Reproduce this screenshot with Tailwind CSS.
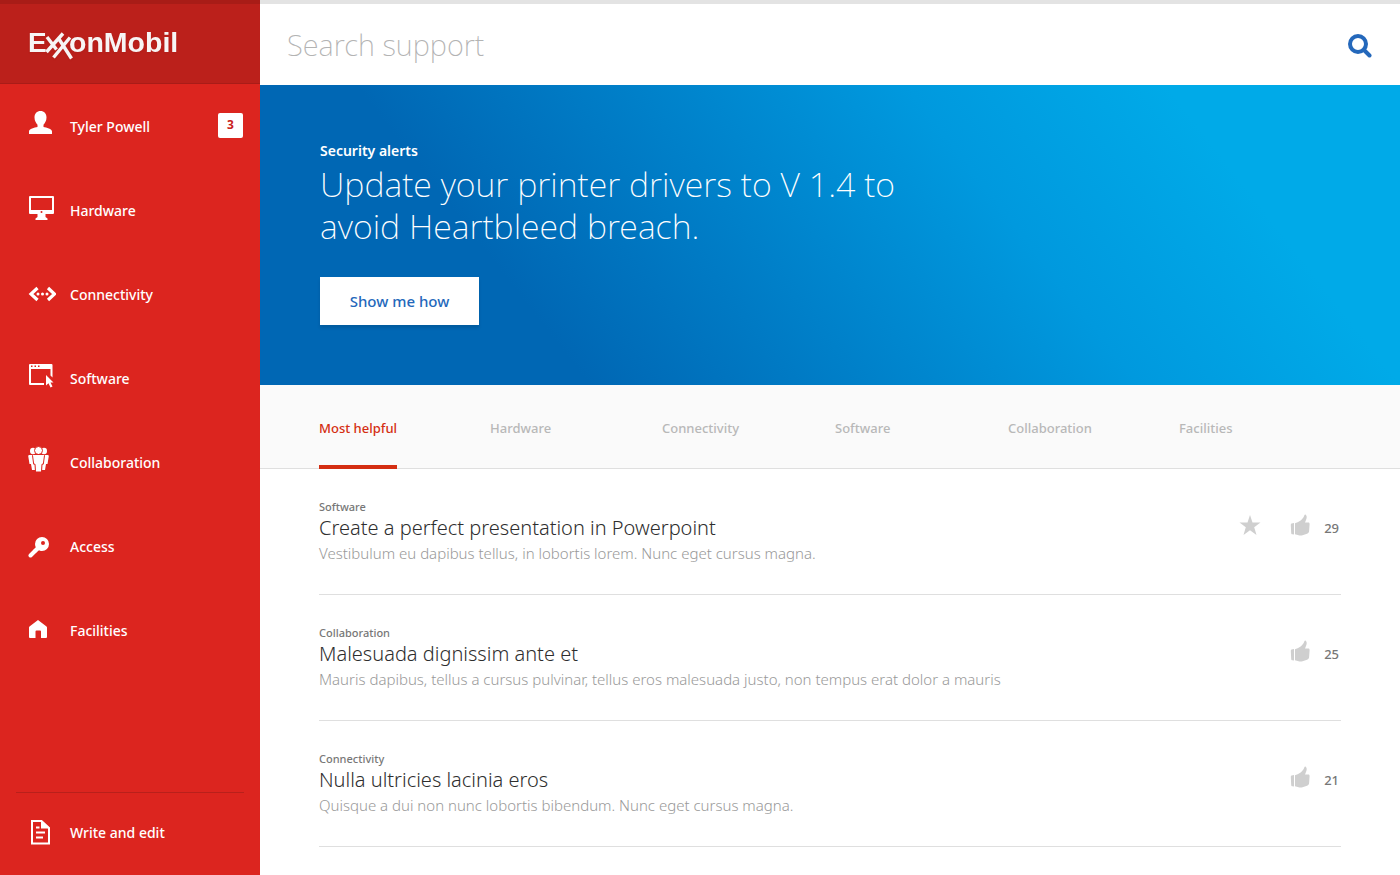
<!DOCTYPE html>
<html lang="en">
<head>
<meta charset="utf-8">
<meta name="viewport" content="width=device-width, initial-scale=1">
<title>ExxonMobil Support</title>
<script src="https://cdn.jsdelivr.net/npm/@tailwindcss/browser@4"></script>
</head>
<body class="flex min-h-screen bg-white font-['Noto_Sans',sans-serif]">
<aside class="flex w-[260px] shrink-0 flex-col bg-[#dc251f] text-white">
  <header class="flex h-[84px] items-center border-t-4 border-b border-t-[#a81c17] border-b-[#a91c18] bg-[#bb201b] pl-7">
    <a href="#" aria-label="ExxonMobil">
      <svg class="block drop-shadow-xs" width="156" height="34" viewBox="0 0 156 34" fill="#f7f5f5" font-family="Liberation Sans, sans-serif" font-weight="700">
        <text x="0" y="25" font-size="28">E</text>
        <g fill="none" stroke="#f7f5f5" stroke-width="3.400">
          <path d="M19 10 L28.500 22.500M18.500 25 L35 6.500M30 10.500 L43.500 31.500M25.500 30.500 L42 10.500"/>
        </g>
        <text x="41" y="25" font-size="28.500">onMobil</text>
      </svg>
    </a>
  </header>
  <nav aria-label="Main" class="flex grow flex-col text-sm font-medium">
    <a href="#" class="flex h-[84px] items-center pt-0.5 pr-[17px] pl-7">
      <svg class="mr-3.5 mb-2 h-7 w-7" viewBox="0 0 28 28" fill="#fff"><path d="M12.500 2c3.600 0 6 2.600 6 6.500 0 3.500-1.700 5.700-3 7.200v2.300c3 .6 8.500 1.700 8.500 4.500V25H1v-2.500c0-2.800 5.500-3.900 8.500-4.500v-2.300c-1.300-1.500-3-3.700-3-7.200 0-3.900 2.400-6.500 6-6.500z"/></svg>
      <span class="grow">Tyler Powell</span>
      <span class="mb-1 flex h-[25px] w-[25px] items-center justify-center rounded-xs bg-white text-xs font-bold text-[#c9211c]">3</span>
    </a>
    <a href="#" class="flex h-[84px] items-center pt-0.5 pl-7">
      <svg class="mr-3.5 mb-2 h-7 w-7" viewBox="0 0 28 28" fill="#fff"><path fill-rule="evenodd" d="M2 3h23a1 1 0 0 1 1 1v16a1 1 0 0 1-1 1H2a1 1 0 0 1-1-1V4a1 1 0 0 1 1-1zm1 2v12h21V5zM13.500 18a1 1 0 1 0 0 2 1 1 0 0 0 0-2zM9.500 21h8v3l2 1.500V27h-12v-1.500l2-1.500z"/></svg>
      Hardware
    </a>
    <a href="#" class="flex h-[84px] items-center pt-0.5 pl-7">
      <svg class="mr-3.5 mb-0.5 h-7 w-7" viewBox="0 0 28 28" fill="none" stroke="#fff" stroke-width="3.200"><path d="M9.500 8 3 14l6.500 6M20 8l6.500 6-6.500 6"/><g fill="#fff" stroke="none"><circle cx="10" cy="14" r="1.500"/><circle cx="14.500" cy="14" r="1.500"/><circle cx="19" cy="14" r="1.500"/></g></svg>
      Connectivity
    </a>
    <a href="#" class="flex h-[84px] items-center pt-0.5 pl-7">
      <svg class="mr-3.5 mb-2 h-7 w-7" viewBox="0 0 28 28"><path fill="#fff" fill-rule="evenodd" d="M2 3h21.500a1 1 0 0 1 1 1v12.500l-2-2V8H3v14h13v2H2a1 1 0 0 1-1-1V4a1 1 0 0 1 1-1zm1 1.500V6h1.500V4.500zm3.500 0V6H8V4.500zm3.500 0V6h1.500V4.500zM18 14l7.500 7.500h-3l2 4-2 1-2-4.200L18 24.500z"/></svg>
      Software
    </a>
    <a href="#" class="flex h-[84px] items-center pt-0.5 pl-7">
      <svg class="mr-3.5 mb-2 h-7 w-7" viewBox="0 0 28 28" fill="#fff"><ellipse cx="5" cy="6" rx="3" ry="3.300"/><ellipse cx="16" cy="6" rx="3" ry="3.300"/><path d="M.800 10h5L7.500 25H4l-1-6H1.500L.200 11zM20.200 10h-5L13.500 25H17l1-6h1.500l1.300-8z"/><g stroke="#dc251f"><circle cx="10.500" cy="5.500" r="4"/><path d="M5.500 9.500h10c.6 0 1 .4 1 1l-1.200 8.700h-1.300L13.500 27h-6L7 19.200H5.700L4.500 10.500c0-.6.400-1 1-1z"/></g></svg>
      Collaboration
    </a>
    <a href="#" class="flex h-[84px] items-center pt-0.5 pl-7">
      <svg class="mr-3.5 h-7 w-7" viewBox="0 0 28 28"><path fill="none" stroke="#fff" stroke-width="4" stroke-linecap="round" d="M2.500 22.500 10.500 14.500"/><path fill="#fff" fill-rule="evenodd" d="M14 4a7 7 0 1 1 0 14c-1.500 0-2.500-.2-3.500-.8l-3 3-2.500-3 3-2.500C7.400 13.700 7 12.500 7 11a7 7 0 0 1 7-7zm1 4a2 2 0 1 0 0 4 2 2 0 0 0 0-4z"/></svg>
      Access
    </a>
    <a href="#" class="flex h-[84px] items-center pt-0.5 pl-7">
      <svg class="mr-3.5 h-7 w-7" viewBox="0 0 28 28" fill="#fff"><path d="M10 3l8.500 6.500c.3.300.5.600.5 1V20a1 1 0 0 1-1 1h-5v-6.500a1 1 0 0 0-1-1H8.500a1 1 0 0 0-1 1V21H2a1 1 0 0 1-1-1v-9.500c0-.4.200-.7.500-1z"/></svg>
      Facilities
    </a>
    <a href="#" class="mx-4 mt-auto flex h-[83px] items-center border-t border-[#b9201b] pb-0.5 pl-3">
      <svg class="mr-3.5 mb-0.5 h-7 w-7" viewBox="0 0 28 28" fill="none" stroke="#fff" stroke-width="2"><path d="M4 3h9.500L21 10v15.500H4z"/><path fill="#fff" stroke="none" d="M13 2l9 8.500h-9z"/><path d="M8 9.500h3.500M8 14.500h9M8 19.500h7"/></svg>
      Write and edit
    </a>
  </nav>
</aside>
<main class="min-w-0 grow">
  <form role="search" class="flex h-[85px] items-center border-t-4 border-[#e3e3e3] pr-7 pl-[27px]">
    <input type="search" aria-label="Search support" placeholder="Search support" class="min-w-0 grow text-[29px] font-extralight text-gray-700 outline-none placeholder:text-[#b3b3b3]">
    <button type="submit" aria-label="Search" class="pt-0.5"><svg class="block h-6 w-6" viewBox="0 0 24 24" fill="none" stroke="#2468bb" stroke-width="4"><circle cx="10" cy="10" r="8"/><path stroke-linecap="round" d="m16 16 5.500 5.500"/></svg></button>
  </form>
  <section class="h-[300px] bg-[linear-gradient(52deg,#0067b4_24%,#0099de_64%,#00aae8_83%)] px-[60px] pt-[54px] text-white">
    <h2 class="text-sm/6 font-semibold">Security alerts</h2>
    <h1 class="text-[34px]/[42px] font-extralight">Update your printer drivers to V 1.4 to<br>avoid Heartbleed breach.</h1>
    <button type="button" class="mt-[30px] h-12 w-[159px] bg-white text-[15px] font-medium text-[#2468bb] shadow-[0_3px_3px_#0000001f]">Show me how</button>
  </section>
  <nav aria-label="Topics" class="flex h-[84px] border-b border-[#dfdfdf] bg-[#fafafa] pl-[59px] text-[13px] font-medium text-[#b8b8b8]">
    <div class="w-[171px]"><a href="#" aria-current="page" class="flex h-[84px] w-fit items-center border-b-4 border-[#d42e12] pt-[7px] text-[#d42e12]">Most helpful</a></div>
    <div class="w-[172px]"><a href="#" class="flex h-[84px] w-fit items-center pt-[3px]">Hardware</a></div>
    <div class="w-[173px]"><a href="#" class="flex h-[84px] w-fit items-center pt-[3px]">Connectivity</a></div>
    <div class="w-[173px]"><a href="#" class="flex h-[84px] w-fit items-center pt-[3px]">Software</a></div>
    <div class="w-[171px]"><a href="#" class="flex h-[84px] w-fit items-center pt-[3px]">Collaboration</a></div>
    <a href="#" class="flex h-[84px] items-center pt-[3px]">Facilities</a>
  </nav>
  <svg class="hidden">
    <symbol id="thumb" viewBox="0 0 20 24"><path d="M1.500 10.500 4 10v11.500l-1.500-.200C1.700 21.200 1.200 21 1.200 20L.800 12c0-.800.200-1.300.700-1.500zM5 10.200c3.500-.900 7.500-3 9.300-7.700.300-.800.800-1.200 1.400-.700 1.300 1 1.300 3.200.2 5.400l-.9 2.300 3.400.1c.9 0 1.200.700 1.200 1.500l-.5 7c-.1 1.500-.9 2.200-2 2.600l-4.600 1.600c-1 .3-2 .4-3 .1L5 21.300z"/></symbol>
  </svg>
  <div class="px-[59px]">
    <article class="flex h-[126px] border-b border-[#dfdfdf] pt-[30px]">
      <div class="min-w-0 grow">
        <p class="text-[11px]/4 font-medium text-[#777]">Software</p>
        <h3 class="text-xl/[26px] font-light text-[#2e2e2e]">Create a perfect presentation in Powerpoint</h3>
        <p class="text-[15px]/6 font-light text-[#999]">Vestibulum eu dapibus tellus, in lobortis lorem. Nunc eget cursus magna.</p>
      </div>
      <button type="button" aria-label="Favourite" class="mt-3.5 mr-7 h-6"><svg class="h-6 w-6" viewBox="0 0 24 24" fill="#cfcfcf"><path d="m12 2 2.500 7.500h8l-6.300 4.800 2.300 7.700-6.500-4.700L5.500 22l2.300-7.700L1.500 9.500h8z"/></svg></button>
      <button type="button" aria-label="Like, 29" class="mt-3.5 mr-0.5 flex h-6 items-center gap-3.5 text-[13px] font-medium text-[#777]"><svg class="h-6 w-5" fill="#cfcfcf"><use href="#thumb"/></svg><span class="pt-2">29</span></button>
    </article>
    <article class="flex h-[126px] border-b border-[#dfdfdf] pt-[30px]">
      <div class="min-w-0 grow">
        <p class="text-[11px]/4 font-medium text-[#777]">Collaboration</p>
        <h3 class="text-xl/[26px] font-light text-[#2e2e2e]">Malesuada dignissim ante et</h3>
        <p class="text-[15px]/6 font-light text-[#999]">Mauris dapibus, tellus a cursus pulvinar, tellus eros malesuada justo, non tempus erat dolor a mauris</p>
      </div>
      <button type="button" aria-label="Like, 25" class="mt-3.5 mr-0.5 flex h-6 items-center gap-3.5 text-[13px] font-medium text-[#777]"><svg class="h-6 w-5" fill="#cfcfcf"><use href="#thumb"/></svg><span class="pt-2">25</span></button>
    </article>
    <article class="flex h-[126px] border-b border-[#dfdfdf] pt-[30px]">
      <div class="min-w-0 grow">
        <p class="text-[11px]/4 font-medium text-[#777]">Connectivity</p>
        <h3 class="text-xl/[26px] font-light text-[#2e2e2e]">Nulla ultricies lacinia eros</h3>
        <p class="text-[15px]/6 font-light text-[#999]">Quisque a dui non nunc lobortis bibendum. Nunc eget cursus magna.</p>
      </div>
      <button type="button" aria-label="Like, 21" class="mt-3.5 mr-0.5 flex h-6 items-center gap-3.5 text-[13px] font-medium text-[#777]"><svg class="h-6 w-5" fill="#cfcfcf"><use href="#thumb"/></svg><span class="pt-2">21</span></button>
    </article>
  </div>
</main>
</body>
</html>
